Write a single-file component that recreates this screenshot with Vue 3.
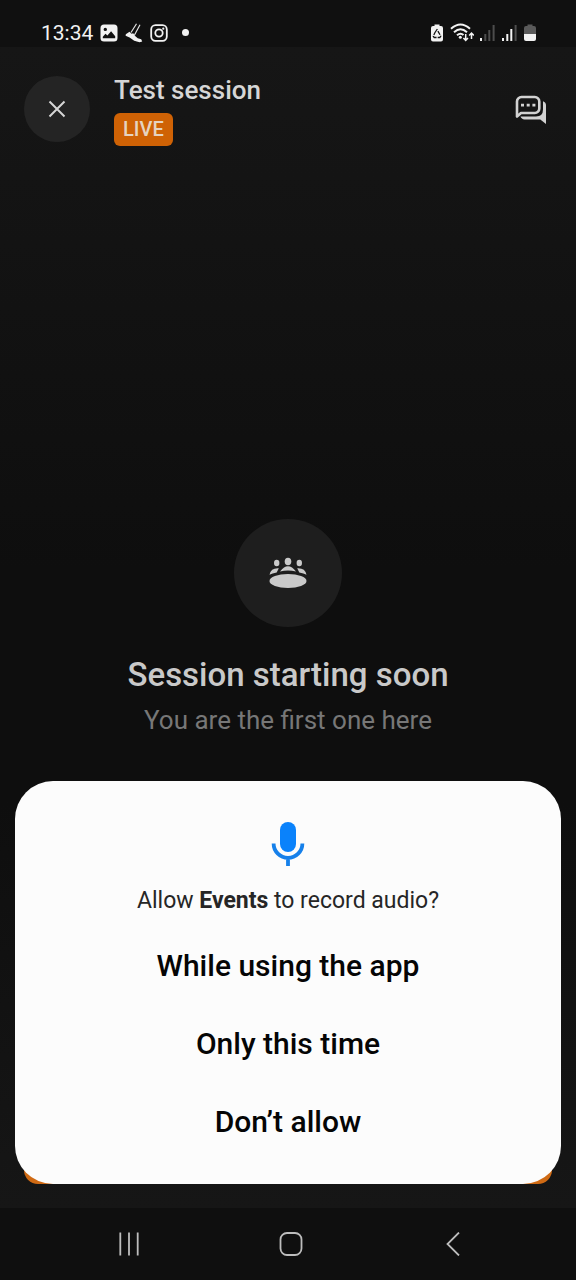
<script setup>
const choices = ['While using the app', 'Only this time', 'Don’t allow']
</script>

<template>
  <div class="screen">
    <div class="status">
      <div class="status-left">
        <span class="clock">13:34</span>
        <svg width="18" height="18" viewBox="0 0 18 18">
          <path fill="#f2f2f2" fill-rule="evenodd" d="M4 .5h10A3.5 3.5 0 0 1 17.500 4v10a3.500 3.500 0 0 1-3.500 3.500H4A3.500 3.500 0 0 1 .5 14V4A3.500 3.500 0 0 1 4 .5ZM5.300 3.700a1.700 1.700 0 1 0 0 3.400 1.700 1.700 0 0 0 0-3.400ZM2.800 14.300h12.400v-2.100l-4.100-5-3.700 4.400-1.900-1.800-2.700 3Z" />
        </svg>
        <svg width="18" height="20" viewBox="0 0 18 20">
          <path fill="#f2f2f2" d="M.8 11.300 4.500 8.800l2 2 1.700-.5 2.200 3 2.400 2 3.400.9 1 2.300-2.600.7-5.400-1.500-4.600-3.200L.6 12.800Z" />
          <path fill="none" stroke="#e2e2e2" stroke-width="1.200" d="M6 9.500 11.500.8M9.500 12l5.500-10.200" />
        </svg>
        <svg width="18" height="18" viewBox="0 0 18 18" fill="none" stroke="#f2f2f2" stroke-width="1.800">
          <rect x="1.200" y="1.200" width="15.600" height="15.600" rx="4.300" />
          <circle cx="9" cy="9" r="3.700" />
          <circle cx="13.300" cy="4.700" r="1.100" fill="#f2f2f2" stroke="none" />
        </svg>
        <span class="more"></span>
      </div>
      <div class="status-right">
        <svg width="12" height="18" viewBox="0 0 12 18">
          <path fill="#f2f2f2" d="M3.500 2V.5h5V2H10a2 2 0 0 1 2 2v11.500a2 2 0 0 1-2 2H2a2 2 0 0 1-2-2V4a2 2 0 0 1 2-2Z" />
          <path fill="none" stroke="#111" stroke-width="1.300" stroke-dasharray="4.300 1.100" stroke-linejoin="round" d="M4 8.500 6 5.500l3.800 6.700-1 1.300H3.200l-1-1.300L4 8.500" />
        </svg>
        <svg width="25" height="19" viewBox="-1 0 25 19" fill="none" stroke="#f2f2f2" stroke-width="2">
          <path d="M1 5.800Q10.500-2.800 20 5.800M4 9.200q6.500-5.800 13 0M7 12.300q3.500-3 6.500-.3" />
          <circle cx="10.300" cy="14.300" r="1.500" fill="#f2f2f2" stroke="none" />
          <path stroke-width="1.500" d="M15.700 11v6M13.400 14.900l2.300 2.400 2.300-2.400M21.500 16v-5.500M19.200 12.400l2.300-2.400 2.300 2.400" />
        </svg>
        <svg width="16" height="18" viewBox="0 0 16 18">
          <path fill="#f2f2f2" d="M0 14h2v3H0z" />
          <path fill="#4d4d4d" d="M4.300 10h2v7h-2zM8.300 6h2v11h-2zM12.600 1h2v16h-2z" />
        </svg>
        <svg width="16" height="18" viewBox="0 0 16 18">
          <path fill="#f2f2f2" d="M0 14h2v3H0zM4.300 10h2v7h-2zM8.300 5h2v12h-2z" />
          <path fill="#4d4d4d" d="M12.600 1h2v16h-2z" />
        </svg>
        <svg width="12" height="18" viewBox="0 0 12 18">
          <path fill="#5a5a5a" d="M3.500 2V.5h5V2H10a2 2 0 0 1 2 2v6H0V4a2 2 0 0 1 2-2Z" />
          <path fill="#f2f2f2" d="M0 10h12v5a2 2 0 0 1-2 2H2a2 2 0 0 1-2-2Z" />
        </svg>
      </div>
    </div>

    <div class="app">
      <header class="header">
        <button class="close" aria-label="Close">
          <svg width="18" height="18" viewBox="0 0 18 18" stroke="#d6d6d6" stroke-width="2"><path d="m1.500 1.500 15 15m0-15-15 15" /></svg>
        </button>
        <div class="heading">
          <h1>Test session</h1>
          <span class="live">LIVE</span>
        </div>
        <button class="chat" aria-label="Chat">
          <svg width="32" height="30" viewBox="0 0 32 30">
            <path fill="none" stroke="#d2d2d2" stroke-width="2.600" stroke-linejoin="round" d="M2 19V6.500a4.500 4.500 0 0 1 4.500-4.500h13.300a4.500 4.500 0 0 1 4.500 4.500v7a4.500 4.500 0 0 1-4.500 4.500H6L2 21.500Z" />
            <path fill="#d2d2d2" d="M6 8.800h3v2.600H6zM11.700 8.800h3v2.600h-3zM17.400 8.800h3v2.600h-3zM28 6.300q3 1 3 4V29l-5.700-4.600H9.500q-3 0-4-2.800H21q7 0 7-7Z" />
          </svg>
        </button>
      </header>

      <main class="waiting">
        <div class="badge">
          <svg width="40" height="32" viewBox="0 0 40 32" fill="#cacaca">
            <ellipse cx="20" cy="24" rx="18.500" ry="7" />
            <ellipse cx="20" cy="4.500" rx="3.300" ry="3.800" />
            <ellipse cx="8.700" cy="6" rx="2.700" ry="3.200" />
            <ellipse cx="31.300" cy="6" rx="2.700" ry="3.200" />
            <path d="M12 14.500q8-10.500 16 0-8-2-16 0ZM1.500 17.700q1.500-7 9.300-6.400L8.700 15.500q-4.500 1-7.200 2.200ZM38.500 17.700q-1.500-7-9.300-6.400l2.100 4.200q4.500 1 7.200 2.200Z" />
          </svg>
        </div>
        <h2>Session starting soon</h2>
        <p>You are the first one here</p>
      </main>

      <div class="footer"><div class="action"></div></div>

      <section class="dialog" role="dialog" aria-labelledby="question">
        <svg class="mic" width="34" height="46" viewBox="0 0 34 46">
          <rect x="9" y="1" width="16" height="30" rx="8" fill="#0a82fb" />
          <path fill="none" stroke="#1680ea" stroke-width="3.800" d="M2.600 22.500a14.400 14.400 0 0 0 28.800 0M17 36v9" />
        </svg>
        <p id="question">Allow <strong>Events</strong> to record audio?</p>
        <button v-for="choice in choices" :key="choice" class="choice">{{ choice }}</button>
      </section>
    </div>

    <nav class="nav">
      <button aria-label="Recent apps">
        <svg width="24" height="24" viewBox="0 0 24 24" stroke="#bdbdbd" stroke-width="1.800"><path d="M3.300.5v23M12 .5v23M20.700.5v23" /></svg>
      </button>
      <button aria-label="Home">
        <svg width="24" height="24" viewBox="0 0 24 24" fill="none" stroke="#bdbdbd" stroke-width="1.800"><rect x="1.500" y="1" width="21" height="22" rx="6.500" /></svg>
      </button>
      <button aria-label="Back">
        <svg width="24" height="24" viewBox="0 0 24 24" fill="none" stroke="#bdbdbd" stroke-width="1.800"><path d="M18 .5 6.500 12 18 23.500" /></svg>
      </button>
    </nav>
  </div>
</template>

<style>
body {
  margin: 0;
  background: #0f0f0f;
}
</style>

<style scoped>
.screen {
  display: flex;
  flex-direction: column;
  min-height: 100vh;
  font-family: Roboto, "Liberation Sans", sans-serif;
  background: #0f0f0f;
}
h1, h2, p {
  margin: 0;
}
button {
  display: flex;
  align-items: center;
  justify-content: center;
  padding: 0;
  border: 0;
  background: none;
  font-family: inherit;
  cursor: pointer;
}
svg {
  display: block;
  flex: none;
}
.status {
  display: flex;
  justify-content: space-between;
  align-items: center;
  height: 29px;
  padding: 18px 40px 0 41px;
  background: #101010;
}
.status-left, .status-right {
  display: flex;
  align-items: center;
  gap: 7px;
}
.status-right {
  gap: 6px;
}
.clock {
  font-size: 21px;
  line-height: 24px;
  color: #f2f2f2;
}
.more {
  width: 7px;
  height: 7px;
  margin-left: 7px;
  border-radius: 50%;
  background: #f2f2f2;
}
.app {
  position: relative;
  flex: 1;
  display: flex;
  flex-direction: column;
  background: linear-gradient(#161616, #0e0e0e 45%, #0e0e0e 65%, #161616);
}
.header {
  display: flex;
  align-items: flex-start;
  padding: 29px 29px 0 24px;
}
.close {
  width: 66px;
  height: 66px;
  border-radius: 50%;
  background: #242424;
}
.chat {
  height: 68px;
}
.heading {
  flex: 1;
  display: flex;
  flex-direction: column;
  align-items: flex-start;
  gap: 9px;
  padding: 0 24px;
}
h1 {
  font-size: 26px;
  line-height: 28px;
  font-weight: 500;
  color: #d6d6d6;
}
.live {
  padding: 0 9px;
  border-radius: 6px;
  font-size: 20px;
  line-height: 33px;
  font-weight: 500;
  color: #e6d3c0;
  background: #cf6205;
}
.waiting {
  flex: 1;
  display: flex;
  flex-direction: column;
  align-items: center;
  justify-content: center;
  text-align: center;
}
.badge {
  display: flex;
  align-items: center;
  justify-content: center;
  width: 108px;
  height: 108px;
  margin-bottom: 28px;
  border-radius: 50%;
  background: #1e1e1e;
}
h2 {
  font-size: 33px;
  line-height: 40px;
  font-weight: 500;
  color: #c9c9c9;
}
.waiting p {
  margin-top: 8px;
  font-size: 26px;
  line-height: 34px;
  color: #777;
}
.footer {
  padding: 0 24px 24px;
}
.action {
  height: 74px;
  border-radius: 14px;
  background: #cf6a14;
}
.dialog {
  position: absolute;
  left: 15px;
  right: 15px;
  bottom: 24px;
  display: flex;
  flex-direction: column;
  align-items: center;
  padding: 40px 24px 23px;
  border-radius: 38px;
  background: #fcfcfc;
  box-sizing: border-box;
}
#question {
  margin: 19px 0 11px;
  font-size: 23px;
  line-height: 30px;
  color: #262626;
  text-align: center;
}
.choice {
  width: 100%;
  height: 78px;
  font-size: 30px;
  line-height: 36px;
  font-weight: 500;
  color: #050505;
}
.nav {
  display: flex;
  justify-content: center;
  gap: 138px;
  height: 72px;
  padding-left: 5px;
  background: #0f0f0f;
}
</style>
